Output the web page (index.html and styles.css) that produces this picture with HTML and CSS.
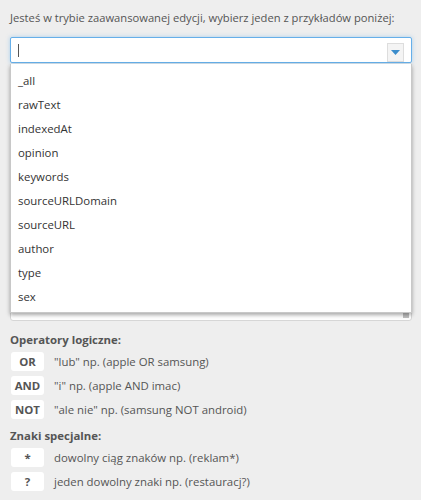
FILE: index.html
```html
<!DOCTYPE html>
<html lang="pl">
<head>
<meta charset="utf-8">
<link rel="stylesheet" href="styles.css">
</head>
<body>
<div class="panel">
  <p class="intro">Jesteś w trybie zaawansowanej edycji, wybierz jeden z przykładów poniżej:</p>
  <div class="field">
    <div class="select">
      <span class="caret"></span>
      <span class="arrow-btn"><svg width="9" height="5" viewBox="0 0 9 5"><path d="M0 0H9L4.5 5Z" fill="#3b8dcc"/></svg></span>
    </div>
    <div class="editor"><span class="grip"></span></div>
    <ul class="dropdown">
      <li>_all</li>
      <li>rawText</li>
      <li>indexedAt</li>
      <li>opinion</li>
      <li>keywords</li>
      <li>sourceURLDomain</li>
      <li>sourceURL</li>
      <li>author</li>
      <li>type</li>
      <li>sex</li>
    </ul>
  </div>
  <div class="help">
    <h4>Operatory logiczne:</h4>
    <div class="row"><span class="key">OR</span><span class="desc">"lub" np. (apple OR samsung)</span></div>
    <div class="row"><span class="key">AND</span><span class="desc">"i" np. (apple AND imac)</span></div>
    <div class="row"><span class="key">NOT</span><span class="desc">"ale nie" np. (samsung NOT android)</span></div>
    <h4 class="second">Znaki specjalne:</h4>
    <div class="row"><span class="key">*</span><span class="desc">dowolny ciąg znaków np. (reklam*)</span></div>
    <div class="row"><span class="key">?</span><span class="desc">jeden dowolny znaki np. (restauracj?)</span></div>
  </div>
</div>
</body>
</html>
```

FILE: styles.css
```css
html, body {
  margin: 0;
  padding: 0;
  background: #eeeeee;
}
body {
  font-family: "Open Sans", "Noto Sans", sans-serif;
  font-size: 11.4px;
  color: #555;
}
.panel {
  padding: 10px 9px 0 10px;
}
.intro {
  margin: 0;
  line-height: 16px;
  white-space: nowrap;
  font-size: 11.2px;
}
.field {
  position: relative;
  margin-top: 11px;
}
.select {
  height: 24px;
  background: #fff;
  border: 1px solid #66afe9;
  border-radius: 2px;
  box-shadow: 0 0 4px rgba(102, 175, 233, 0.5);
  display: flex;
  align-items: center;
  justify-content: space-between;
  padding: 0 7px 0 7px;
}
.caret {
  width: 1px;
  height: 13px;
  background: #555;
}
.arrow-btn {
  width: 17px;
  height: 19px;
  margin-top: 5px;
  background: #f4f4f4;
  border: 1px solid #ddd;
  box-sizing: border-box;
  display: flex;
  align-items: center;
  justify-content: center;
}
.editor {
  position: relative;
  margin-top: 2px;
  height: 254px;
  background: #fff;
  border: 1px solid #d6d6d6;
  border-radius: 3px;
}
.grip {
  position: absolute;
  right: 2px;
  bottom: 2px;
  width: 6px;
  height: 5px;
  background: radial-gradient(circle, #aaa 0.6px, transparent 1px) 0 0 / 2px 2px;
}
.dropdown {
  position: absolute;
  left: 0;
  right: 0;
  top: 27px;
  margin: 0;
  padding: 5px 0 3px;
  list-style: none;
  background: #fff;
  border: 1px solid #c8c8c8;
  border-top: none;
  box-shadow: 0 2px 4px rgba(0, 0, 0, 0.35);
}
.dropdown li {
  height: 24px;
  line-height: 24px;
  padding-left: 7px;
  color: #333;
}
.help {
  padding-top: 11px;
}
.help h4 {
  margin: 0 0 1px;
  font-size: 11.4px;
  font-weight: 700;
  line-height: 16px;
  color: #555;
}
.help h4.second {
  margin-top: 7px;
}
.row {
  display: flex;
  align-items: center;
  gap: 10px;
  height: 24px;
}
.key {
  width: 33px;
  height: 19px;
  margin-left: 1px;
  background: #fff;
  border-radius: 3px;
  display: flex;
  align-items: center;
  justify-content: center;
  font-weight: 700;
  color: #555;
}
.desc {
  color: #555;
}
```
